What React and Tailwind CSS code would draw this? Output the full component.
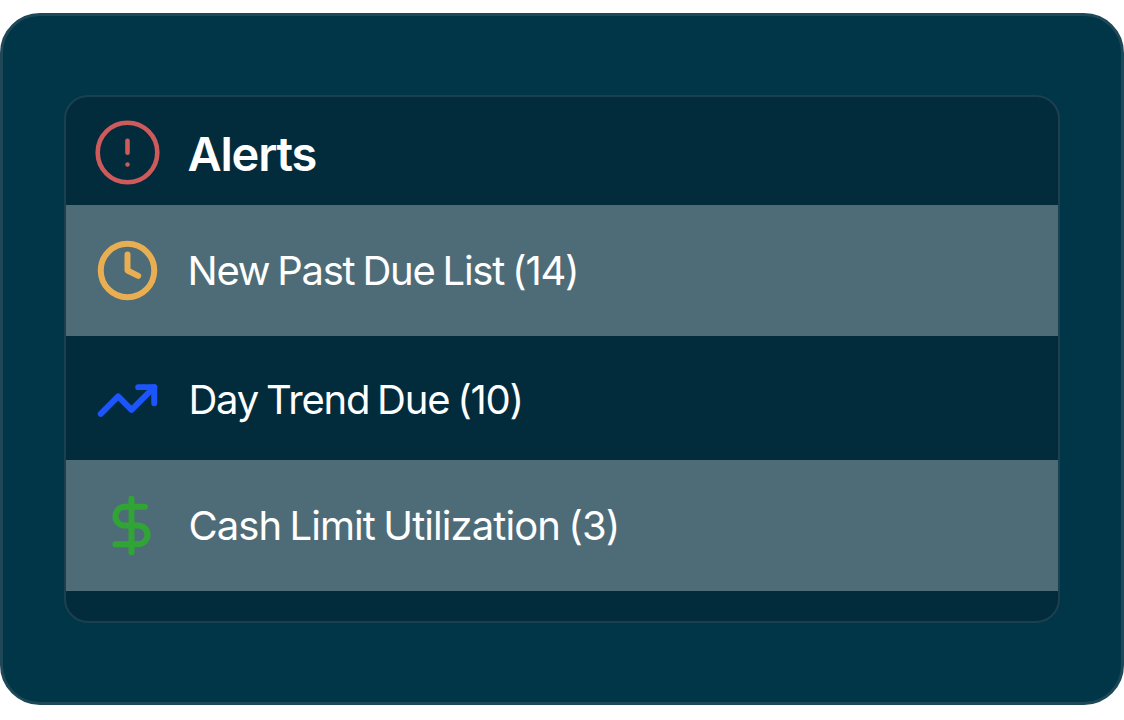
import React from 'react';
import { Clock, TrendingUp, DollarSign } from 'lucide-react';

const alerts = [
  {
    label: 'New Past Due List',
    count: 14,
    Icon: Clock,
    iconClass: 'text-[#e9ae52]',
    rowClass: 'h-[131px] bg-[#4e6c77] pl-[29px] gap-[27.5px]',
    textClass: 'tracking-[-1.25px]',
  },
  {
    label: 'Day Trend Due',
    count: 10,
    Icon: TrendingUp,
    iconClass: 'text-[#1c55fc]',
    rowClass: 'h-[124px] pt-[4px] pl-[29px] gap-[28.5px]',
    textClass: 'tracking-[-1.25px]',
  },
  {
    label: 'Cash Limit Utilization',
    count: 3,
    Icon: DollarSign,
    iconClass: 'text-[#30a536]',
    rowClass: 'h-[131px] bg-[#4e6c77] pl-[33px] gap-[24.5px]',
    textClass: 'tracking-[-0.93px]',
  },
];

const AlertIcon = () => (
  <svg
    className="size-[65px] shrink-0 text-[#cf5a5c]"
    viewBox="0 0 65 65"
    fill="none"
    stroke="currentColor"
    strokeWidth="4.6"
    strokeLinecap="round"
  >
    <circle cx="32.5" cy="32.5" r="29.8" />
    <path d="M32.5 20.8v12M32.5 44.5v.01" />
  </svg>
);

const App = () => {
  return (
    <div className="h-[720px] w-full bg-white pt-[13px] font-[Inter,sans-serif] text-white">
      <div className="h-[692px] rounded-[40px] border-[3px] border-[#1e4858] bg-[#013548] px-[61px] pt-[79px]">
        <div className="h-[528px] overflow-hidden rounded-3xl border-2 border-[#1b4150] bg-[#022c3c]">
          <div className="flex h-[108px] items-center gap-[27.5px] pt-[3px] pl-[29px]">
            <AlertIcon />
            <h1 className="mt-px text-[47px] leading-none font-semibold tracking-[-1.2px]">Alerts</h1>
          </div>
          {alerts.map(({ label, count, Icon, iconClass, rowClass, textClass }) => (
            <div key={label} className={`flex items-center ${rowClass}`}>
              <Icon
                size={65}
                viewBox="-0.15 -0.15 24.3 24.3"
                strokeWidth={2.24}
                className={`shrink-0 ${iconClass}`}
              />
              <span className={`text-[40px] leading-none whitespace-nowrap [word-spacing:-2px] ${textClass}`}>
                {label} ({count})
              </span>
            </div>
          ))}
        </div>
      </div>
    </div>
  );
};

export default App;
